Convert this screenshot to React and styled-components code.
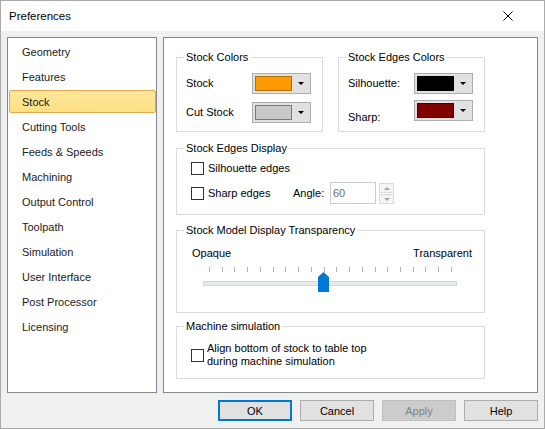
import React, { useState } from 'react';
import styled, { createGlobalStyle } from 'styled-components';

const GlobalStyle = createGlobalStyle`
  html, body {
    margin: 0;
    padding: 0;
    background: #f0f0f0;
  }
  body {
    font-family: "Liberation Sans", Arial, sans-serif;
    font-size: 11px;
    color: #000;
  }
  * {
    box-sizing: border-box;
  }
`;

const Window = styled.div`
  width: 545px;
  height: 429px;
  border: 1px solid #aaaaaa;
  background: #f0f0f0;
  display: flex;
  flex-direction: column;
`;

const TitleBar = styled.div`
  height: 30px;
  background: #fff;
  display: flex;
  align-items: center;
  justify-content: space-between;
  padding: 0 31px 0 8px;
  font-size: 11.5px;
`;

const Body = styled.div`
  flex: 1;
  padding: 6px 6px 7px 6px;
  display: flex;
  flex-direction: column;
  gap: 7px;
`;

const Panels = styled.div`
  height: 356px;
  display: flex;
  gap: 6px;
`;

const NavList = styled.div`
  width: 150px;
  border: 1px solid #828790;
  background: #fff;
  padding-top: 1px;
  display: flex;
  flex-direction: column;
`;

const NavItem = styled.div`
  height: 23px;
  flex: none;
  margin: 1px 0 1px 1px;
  padding-left: 12px;
  display: flex;
  align-items: center;
  border: 1px solid ${p => (p.$selected ? '#e3a94f' : 'transparent')};
  border-radius: 2px;
  background: ${p => (p.$selected ? 'linear-gradient(#fee79a, #fde084)' : 'transparent')};
  color: #1a1a1a;
  cursor: default;
`;

const Content = styled.div`
  flex: 1;
  border: 1px solid #828790;
  background: #fff;
  padding: 19px 0 0 12px;
  display: flex;
  flex-direction: column;
`;

const ColorRow = styled.div`
  display: flex;
  gap: 15px;
`;

const Group = styled.div`
  position: relative;
  width: ${p => p.$w}px;
  height: ${p => p.$h}px;
  margin-top: ${p => p.$mt || 0}px;
  border: 1px solid #dcdcdc;
  padding: ${p => p.$pad};
`;

const GroupTitle = styled.span`
  position: absolute;
  top: -7px;
  left: 7px;
  padding: 0 2px;
  line-height: 13px;
  background: #fff;
  white-space: nowrap;
`;

const ColorGrid = styled.div`
  display: grid;
  grid-template-columns: 66px 59px;
  grid-auto-rows: 21px;
  row-gap: ${p => p.$gap}px;
  align-items: center;
`;

const Label = styled.span`
  line-height: 13px;
  white-space: nowrap;
  align-self: ${p => (p.$drop ? 'end' : 'center')};
  margin-bottom: ${p => (p.$drop ? -p.$drop : 0)}px;
`;

const ColorButton = styled.button`
  width: 59px;
  height: 21px;
  border: 1px solid #adadad;
  background: #e1e1e1;
  padding: 0 0 0 2px;
  display: flex;
  align-items: center;
  font: inherit;
`;

const Swatch = styled.span`
  width: 37px;
  height: 15px;
  background: ${p => p.$color};
  border: 1px solid ${p => p.$edge};
`;

const DropArrow = styled.span`
  flex: 1;
  display: flex;
  justify-content: center;
  &::after {
    content: '';
    border-left: 3px solid transparent;
    border-right: 3px solid transparent;
    border-top: 3px solid #000;
    margin-right: 1px;
  }
`;

const Rows = styled.div`
  display: flex;
  flex-direction: column;
  gap: ${p => p.$gap || 0}px;
`;

const Row = styled.div`
  display: flex;
  align-items: center;
  height: ${p => p.$h}px;
`;

const CheckLabel = styled.label`
  display: flex;
  align-items: center;
  gap: ${p => p.$gap || 4}px;
  width: ${p => (p.$w ? `${p.$w}px` : 'auto')};
  line-height: 13px;
  white-space: nowrap;
`;

const Box = styled.span`
  width: 13px;
  height: 13px;
  flex: none;
  border: 1px solid #333;
  background: #fff;
`;

const AngleLabel = styled.span`
  width: 37px;
`;

const NumberInput = styled.div`
  width: 46px;
  height: 22px;
  border: 1px solid #cccccc;
  background: #fff;
  color: #6d6d6d;
  padding-left: 2px;
  display: flex;
  align-items: center;
`;

const Spin = styled.div`
  margin-left: 3px;
  height: 22px;
  padding-top: 1px;
  display: flex;
  flex-direction: column;
  gap: 1px;
`;

const SpinButton = styled.span`
  width: 15px;
  height: 10px;
  border: 1px solid #dadada;
  background: #f4f4f4;
  display: flex;
  align-items: center;
  justify-content: center;
  &::after {
    content: '';
    border-left: 3px solid transparent;
    border-right: 3px solid transparent;
    ${p => (p.$up ? 'border-bottom' : 'border-top')}: 3px solid #a6a6a6;
  }
`;

const EndLabels = styled.div`
  display: flex;
  justify-content: space-between;
  line-height: 13px;
`;

const Slider = styled.div`
  position: relative;
  width: 254px;
  margin: 7px 0 0 11px;
`;

const Ticks = styled.div`
  height: 5px;
  padding: 0 5px 0 6px;
  display: flex;
  justify-content: space-between;
`;

const Tick = styled.span`
  width: 1px;
  height: 5px;
  background: #b4b4b4;
`;

const Track = styled.div`
  height: 5px;
  margin-top: 9px;
  background: #e7eaea;
  border: 1px solid #d6d6d6;
`;

const Thumb = styled.svg`
  position: absolute;
  top: 5px;
  left: ${p => p.$x}px;
`;

const ButtonBar = styled.div`
  display: flex;
  justify-content: flex-end;
  gap: 8px;
`;

const DialogButton = styled.button`
  width: 74px;
  height: 21px;
  font: inherit;
  padding: 0;
  background: ${p => (p.$disabled ? '#cccccc' : '#e1e1e1')};
  color: ${p => (p.$disabled ? '#838383' : '#000')};
  border: ${p => (p.$default ? '2px solid #0078d7' : p.$disabled ? '1px solid #bfbfbf' : '1px solid #adadad')};
`;

const pages = [
  'Geometry',
  'Features',
  'Stock',
  'Cutting Tools',
  'Feeds & Speeds',
  'Machining',
  'Output Control',
  'Toolpath',
  'Simulation',
  'User Interface',
  'Post Processor',
  'Licensing',
];

const ColorPick = ({ color, edge }) => (
  <ColorButton>
    <Swatch $color={color} $edge={edge} />
    <DropArrow />
  </ColorButton>
);

export default function App() {
  const [page, setPage] = useState('Stock');
  const tickCount = 20;

  return (
    <>
      <GlobalStyle />
      <Window>
        <TitleBar>
          <span>Preferences</span>
          <svg width="10" height="10" viewBox="0 0 10 10">
            <path d="M0.5 0.5 L9.5 9.5 M9.5 0.5 L0.5 9.5" stroke="#000" strokeWidth="1" />
          </svg>
        </TitleBar>
        <Body>
          <Panels>
            <NavList>
              {pages.map(p => (
                <NavItem key={p} $selected={p === page} onClick={() => setPage(p)}>
                  {p}
                </NavItem>
              ))}
            </NavList>
            <Content>
              <ColorRow>
                <Group $w={147} $h={75} $pad="15px 0 0 9px">
                  <GroupTitle>Stock Colors</GroupTitle>
                  <ColorGrid $gap={8}>
                    <Label>Stock</Label>
                    <ColorPick color="#ff9900" edge="#b86e00" />
                    <Label>Cut Stock</Label>
                    <ColorPick color="#c8c8c8" edge="#7a7a7a" />
                  </ColorGrid>
                </Group>
                <Group $w={147} $h={75} $pad="15px 0 0 9px">
                  <GroupTitle>Stock Edges Colors</GroupTitle>
                  <ColorGrid $gap={6}>
                    <Label>Silhouette:</Label>
                    <ColorPick color="#000000" edge="#000000" />
                    <Label $drop={3}>Sharp:</Label>
                    <ColorPick color="#800000" edge="#400000" />
                  </ColorGrid>
                </Group>
              </ColorRow>

              <Group $w={309} $h={67} $mt={16} $pad="12px 0 0 14px">
                <GroupTitle>Stock Edges Display</GroupTitle>
                <Rows $gap={6}>
                  <Row $h={15}>
                    <CheckLabel>
                      <Box />
                      Silhouette edges
                    </CheckLabel>
                  </Row>
                  <Row $h={22}>
                    <CheckLabel $w={102}>
                      <Box />
                      Sharp edges
                    </CheckLabel>
                    <AngleLabel>Angle:</AngleLabel>
                    <NumberInput>60</NumberInput>
                    <Spin>
                      <SpinButton $up />
                      <SpinButton />
                    </Spin>
                  </Row>
                </Rows>
              </Group>

              <Group $w={309} $h={83} $mt={15} $pad="16px 12px 0 15px">
                <GroupTitle>Stock Model Display Transparency</GroupTitle>
                <EndLabels>
                  <span>Opaque</span>
                  <span>Transparent</span>
                </EndLabels>
                <Slider>
                  <Ticks>
                    {Array.from({ length: tickCount }, (_, i) => (
                      <Tick key={i} />
                    ))}
                  </Ticks>
                  <Track />
                  <Thumb $x={115} width="11" height="20" viewBox="0 0 11 20">
                    <polygon points="0,5 5.5,0 11,5 11,20 0,20" fill="#0078d7" />
                  </Thumb>
                </Slider>
              </Group>

              <Group $w={309} $h={53} $mt={13} $pad="15px 0 0 14px">
                <GroupTitle>Machine simulation</GroupTitle>
                <CheckLabel $gap={3}>
                  <Box />
                  <span>
                    Align bottom of stock to table top
                    <br />
                    during machine simulation
                  </span>
                </CheckLabel>
              </Group>
            </Content>
          </Panels>
          <ButtonBar>
            <DialogButton $default>OK</DialogButton>
            <DialogButton>Cancel</DialogButton>
            <DialogButton $disabled>Apply</DialogButton>
            <DialogButton>Help</DialogButton>
          </ButtonBar>
        </Body>
      </Window>
    </>
  );
}
